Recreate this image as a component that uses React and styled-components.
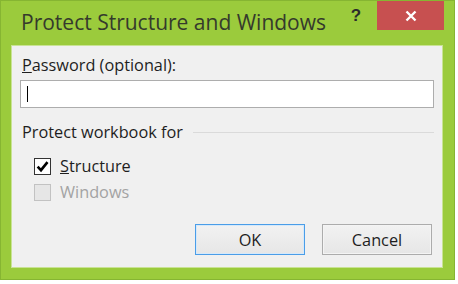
import React from 'react';
import styled, { createGlobalStyle } from 'styled-components';

const GlobalStyle = createGlobalStyle`
  html, body {
    margin: 0;
    padding: 0;
    background: #ffffff;
  }
  body {
    font-family: "Open Sans", "Noto Sans", sans-serif;
  }
`;

const Window = styled.div`
  width: 455px;
  height: 280px;
  box-sizing: border-box;
  background: #9bcb3c;
  border: 1px solid #86b532;
  display: flex;
  flex-direction: column;
  padding: 0 11px 11px 10px;
`;

const TitleBar = styled.div`
  height: 44px;
  display: flex;
  align-items: flex-start;
  flex-shrink: 0;
`;

const Title = styled.div`
  flex: 1;
  padding: 7px 0 0 10px;
  font-size: 21px;
  line-height: 28px;
  color: #353a2c;
  white-space: nowrap;
`;

const HelpButton = styled.div`
  width: 24px;
  margin: 4px 9px 0 0;
  font-family: "Liberation Sans", sans-serif;
  font-weight: bold;
  font-size: 17px;
  line-height: 22px;
  text-align: center;
  color: #2b2b2b;
`;

const CloseButton = styled.div`
  width: 67px;
  height: 29px;
  margin-right: -1px;
  background: #c75050;
  display: flex;
  align-items: center;
  justify-content: center;
`;

const Client = styled.div`
  flex: 1;
  background: #f0f0f0;
  border: 1px solid #c9e394;
  padding: 0 8px;
  display: flex;
  flex-direction: column;
  font-size: 16.3px;
  line-height: 22px;
  color: #1e1e1e;
`;

const Label = styled.div`
  padding: 8px 0 0 2px;
`;

const TextBox = styled.div`
  margin-top: 4px;
  height: 28px;
  box-sizing: border-box;
  background: #ffffff;
  border: 1px solid #adadad;
  display: flex;
  align-items: center;
  padding-left: 6px;
`;

const Caret = styled.div`
  width: 1px;
  height: 16px;
  background: #000;
`;

const GroupHeader = styled.div`
  margin-top: 13px;
  display: flex;
  align-items: center;
  gap: 10px;
  padding-left: 2px;
`;

const Rule = styled.div`
  flex: 1;
  height: 1px;
  margin-top: 1px;
  background: #dadada;
`;

const CheckRow = styled.div`
  display: flex;
  align-items: center;
  gap: 9px;
  margin: ${(p) => p.$top}px 0 0 14px;
  color: ${(p) => (p.$disabled ? '#a3a3a3' : '#1e1e1e')};
`;

const Box = styled.div`
  width: 17px;
  height: 17px;
  box-sizing: border-box;
  border: 1px solid ${(p) => (p.$disabled ? '#c2c2c2' : '#333333')};
  background: ${(p) => (p.$disabled ? '#e6e6e6' : '#ffffff')};
  display: flex;
  align-items: center;
  justify-content: center;
`;

const Buttons = styled.div`
  margin-top: auto;
  margin-bottom: 12px;
  display: flex;
  justify-content: flex-end;
  gap: 17px;
  padding-right: 2px;
`;

const Button = styled.div`
  width: 110px;
  height: 31px;
  box-sizing: border-box;
  border: 1px solid ${(p) => (p.$focused ? '#4a9de8' : '#acacac')};
  box-shadow: inset 0 0 0 1px ${(p) => (p.$focused ? '#d6e9fa' : '#f4f4f4')};
  background: linear-gradient(#f2f2f2, #e6e6e6);
  display: flex;
  align-items: center;
  justify-content: center;
`;

const Check = () => (
  <svg width="13" height="13" viewBox="0 0 12 12">
    <path d="M1.5 6.2 L4.6 9.4 L10.6 2" fill="none" stroke="#000" strokeWidth="2.4" />
  </svg>
);

const Cross = () => (
  <svg width="12" height="12" viewBox="0 0 12 12">
    <path d="M1.5 1.5 L10.5 10.5 M10.5 1.5 L1.5 10.5" stroke="#fff" strokeWidth="2.4" />
  </svg>
);

export default function App() {
  return (
    <>
      <GlobalStyle />
      <Window>
        <TitleBar>
          <Title>Protect Structure and Windows</Title>
          <HelpButton>?</HelpButton>
          <CloseButton>
            <Cross />
          </CloseButton>
        </TitleBar>
        <Client>
          <Label>
            <u>P</u>assword (optional):
          </Label>
          <TextBox>
            <Caret />
          </TextBox>
          <GroupHeader>
            Protect workbook for
            <Rule />
          </GroupHeader>
          <CheckRow $top={12}>
            <Box>
              <Check />
            </Box>
            <span>
              <u>S</u>tructure
            </span>
          </CheckRow>
          <CheckRow $top={4} $disabled>
            <Box $disabled />
            <span>Windows</span>
          </CheckRow>
          <Buttons>
            <Button $focused>OK</Button>
            <Button>Cancel</Button>
          </Buttons>
        </Client>
      </Window>
    </>
  );
}
